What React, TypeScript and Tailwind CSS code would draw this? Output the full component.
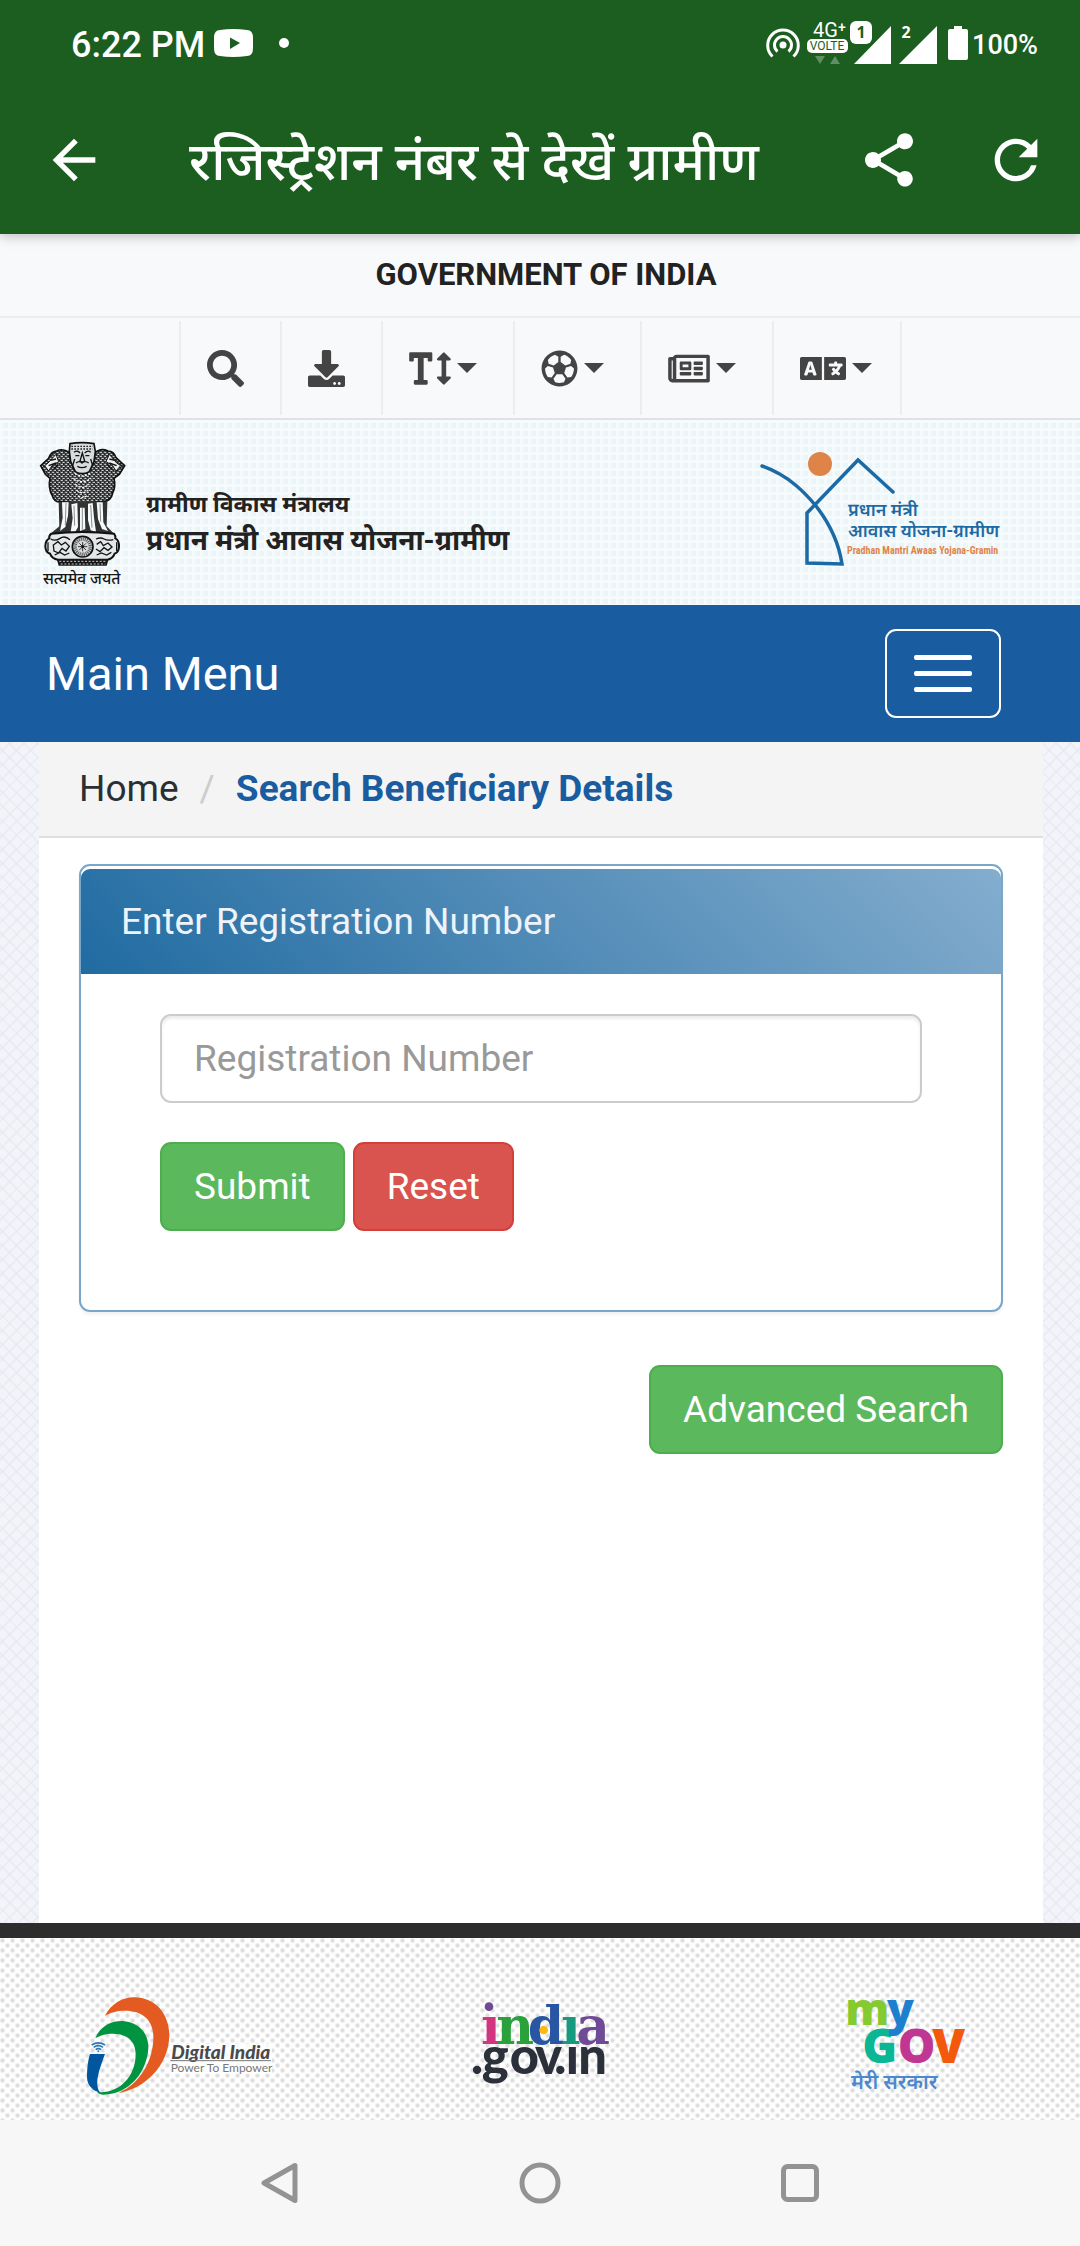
import { useState } from 'react';
import type { ReactNode } from 'react';
import {
  FaDownload,
  FaLanguage,
  FaRegFutbol,
  FaRegNewspaper,
  FaSearch,
  FaTextHeight,
} from 'react-icons/fa';
import { MdArrowBack, MdRefresh, MdShare } from 'react-icons/md';

const tools = [
  { label: 'Search', icon: <FaSearch className="h-[37px] w-[37px]" />, menu: false },
  { label: 'Download', icon: <FaDownload className="h-[37px] w-[37px]" />, menu: false },
  { label: 'Text size', icon: <FaTextHeight className="h-[37px] w-[42px]" />, menu: true },
  { label: 'Games', icon: <FaRegFutbol className="h-[37px] w-[37px]" />, menu: true },
  { label: 'News', icon: <FaRegNewspaper className="h-[37px] w-[42px]" />, menu: true },
  { label: 'Language', icon: <FaLanguage className="h-[37px] w-[46px]" />, menu: true },
];

function StatusBar() {
  return (
    <div className="flex h-[86px] items-center justify-between pl-[71px] pr-[42px] text-white">
      <div className="flex items-center">
        <span className="pt-[3px] text-[36px] leading-[40px] font-medium">6:22 PM</span>
        <svg className="ml-[9px]" width="39" height="28" viewBox="0 0 39 28">
          <path
            fill="#fff"
            d="M6 1Q19 -1 33 1Q39 1 39 9V19Q39 27 33 27Q19 29 6 27Q0 27 0 19V9Q0 1 6 1Z"
          />
          <path fill="#1b5e20" d="M16 8.500 26 14 16 20Z" />
        </svg>
        <span className="ml-[26px] h-[10px] w-[10px] rounded-full bg-white" />
      </div>
      <div className="flex items-center">
        <svg width="34" height="30" viewBox="0 0 34 30" fill="none" stroke="#fff" strokeWidth="3">
          <circle cx="17" cy="17" r="3.500" fill="#fff" stroke="none" />
          <path d="M11.500 23.500A8.500 8.500 0 1 1 22.500 23.500" />
          <path d="M6.500 28.500A15.300 15.300 0 1 1 27.500 28.500" />
        </svg>
        <svg className="ml-[7px] overflow-visible" width="42" height="46" viewBox="0 0 42 46" fontFamily="Roboto, sans-serif">
          <text x="6" y="17" fontSize="20" fill="#fff">4G</text>
          <text x="31" y="12" fontSize="14" fontWeight="500" fill="#fff">+</text>
          <rect y="19" width="41" height="14" rx="5" fill="#fff" />
          <text x="20" y="30" fontSize="12" textAnchor="middle" fill="#1b5e20">VOLTE</text>
          <path d="M8 36h10l-5 8ZM23 44h10l-5-8Z" fill="#5f8f62" />
        </svg>
        <svg className="ml-px" width="90" height="46" viewBox="0 0 90 46" fontFamily="Noto Sans, sans-serif">
          <path d="M4 44 41 6V44ZM49 44 87 6V44Z" fill="#fff" />
          <rect y="1" width="22" height="23" rx="6" fill="#fff" />
          <text x="11" y="18" fontSize="16" fontWeight="700" textAnchor="middle" fill="#1b5e20">1</text>
          <text x="56" y="18" fontSize="16" fontWeight="700" textAnchor="middle" fill="#fff">2</text>
        </svg>
        <svg className="ml-2" width="20" height="36" viewBox="0 0 20 36">
          <path d="M6 1h8v3h4q2 0 2 2v27q0 2-2 2H2q-2 0-2-2V6q0-2 2-2h4Z" fill="#fff" />
        </svg>
        <span className="ml-1 pt-[3px] text-[27px] leading-[32px] font-medium">100%</span>
      </div>
    </div>
  );
}

function AppBar() {
  return (
    <div className="flex h-[148px] items-center pl-[42px] pr-8 text-white">
      <button type="button" aria-label="Back" className="text-[64px]">
        <MdArrowBack />
      </button>
      <h1 className="ml-[83px] flex-1 pt-1 text-[53px] leading-[76px] font-medium whitespace-nowrap">
        रजिस्ट्रेशन नंबर से देखें ग्रामीण
      </h1>
      <button type="button" aria-label="Share" className="text-[64px]">
        <MdShare />
      </button>
      <button type="button" aria-label="Refresh" className="ml-[63px] text-[64px]">
        <MdRefresh />
      </button>
    </div>
  );
}

function Emblem() {
  return (
    <svg className="overflow-visible" width="110" height="164" viewBox="0 0 330 492" role="img" aria-label="Emblem of India">
      <defs>
        <pattern id="fur" width="13" height="12" patternUnits="userSpaceOnUse">
          <rect width="13" height="12" fill="#222" />
          <path d="M1 2Q4 8 7 2M7 8Q10 14 13 8" fill="none" stroke="#e4e8e9" strokeWidth="3" />
        </pattern>
      </defs>
      {/* manes of the side lions */}
      <path
        d="M120 66Q98 50 80 60Q62 62 56 82L32 104L46 130L60 142Q54 170 66 192Q74 216 92 212L120 214L156 222L194 214L222 212Q244 208 248 186Q258 166 252 142L268 130L284 104L258 80Q252 60 234 60Q212 50 194 66Z"
        fill="url(#fur)"
        stroke="#111"
        strokeWidth="5"
      />
      <path d="M78 70 54 96 44 104 56 120 66 104 86 92ZM238 70 260 96 272 104 258 120 248 104 228 92Z" fill="#eef1f2" stroke="#111" strokeWidth="3" />
      <path d="M62 88l16-4M56 104l22-8M70 116l14-16M254 88l-16-4M260 104l-22-8M246 116l-14-16" stroke="#111" strokeWidth="4" />
      {/* front lion */}
      <path d="M120 38Q156 32 192 38L196 62L192 92L178 122Q156 134 136 122L122 92L118 62Z" fill="#d8dcdd" stroke="#111" strokeWidth="5" />
      <path d="M124 46h64M124 54h64" stroke="#222" strokeWidth="4" strokeDasharray="5 4" />
      <path d="M132 64q10-8 18 2M164 66q10-10 18-2M136 74h12M166 74h12M157 66l-7 24q7 6 14 0ZM138 96q10-8 18 0q10-8 20 0M142 106q14 8 28 0M134 84l-6 20M182 84l6 20" fill="none" stroke="#111" strokeWidth="4" />
      <path d="M134 126q22 18 46 0M130 142q26 20 54 0M136 160q20 18 42 0M140 178q16 14 34 0M144 194q12 12 26 0" fill="none" stroke="#f4f6f7" strokeWidth="4" strokeDasharray="7 4" />
      {/* legs */}
      <path d="M86 212H232L230 286L250 306H64L88 286Z" fill="#333" />
      <path d="M96 214h20l-2 40-8 34-16 12 8-40ZM124 220l18-4 2 72-8 14h-14l6-40ZM150 230l14 0 2 64-16 6ZM174 218l14-2 4 44 6 42-16-4-8-30ZM200 214l18 0 2 60 14 26-18-6-12-30Z" fill="#f7fafb" />
      <path d="M108 216l-2 66M132 224l2 60M157 230v66M182 222l4 68M210 218l2 54" stroke="#555" strokeWidth="2" />
      {/* abacus with the wheel */}
      <path d="M64 308Q156 298 252 308Q258 316 256 322Q268 328 267 348Q266 364 254 368Q248 384 232 386H84Q66 384 60 368Q46 364 46 346Q46 328 58 322Q56 314 64 308Z" fill="#e5e8e9" stroke="#111" strokeWidth="6" />
      <path d="M62 324q14 8 28-2t30 4M70 342l14-10 10 10 12-8 12 12-10 14-12-8-10 14-14-6ZM74 372l16-8 14 8 14-6M198 324q14-6 24 0t28 2M200 340l12-8 8 12 14-8 12 12-12 10-12-8-12 12-12-8M200 372l14-6 16 6 14-8M54 334v26M260 334v26" fill="none" stroke="#151515" strokeWidth="4" />
      <circle cx="158" cy="347" r="31" fill="#ccd0d1" stroke="#111" strokeWidth="5" />
      <circle cx="158" cy="347" r="23" fill="none" stroke="#555" strokeWidth="10" strokeDasharray="3 3" />
      <circle cx="158" cy="347" r="16" fill="#ddd" />
      <path d="M158 333v28M144 347h28M148 337l20 20M168 337l-20 20" stroke="#333" strokeWidth="3" />
      <circle cx="158" cy="347" r="4" fill="#111" />
      <path d="M80 384H236L230 404H86Z" fill="#151515" />
      <path d="M88 391H230M92 399H226" stroke="#ccc" strokeWidth="3" strokeDasharray="6 5" />
      <text x="155" y="460" textAnchor="middle" fontSize="47" fontWeight="500" fill="#161616">
        सत्यमेव जयते
      </text>
    </svg>
  );
}

function SchemeLogo() {
  return (
    <svg className="overflow-visible" width="245" height="134" viewBox="0 0 245 134" role="img" aria-label="Pradhan Mantri Awaas Yojana-Gramin">
      <circle cx="61" cy="18" r="12" fill="#df8449" />
      <path
        d="M3 20C31 30 47 48 57 60C71 78 80 98 83 118L48 117V67L99 14L134 46"
        fill="none"
        stroke="#1c6aa5"
        strokeWidth="3.500"
        strokeLinecap="round"
      />
      <text x="89" y="70" fontSize="18" fontWeight="600" fill="#1c6aa5">प्रधान मंत्री</text>
      <text x="89" y="91" fontSize="18" fontWeight="600" fill="#1c6aa5">आवास योजना-ग्रामीण</text>
      <text x="88" y="108" fontSize="10" fontWeight="700" fontFamily="Roboto Condensed, Roboto, sans-serif" fill="#df8449">
        Pradhan Mantri Awaas Yojana-Gramin
      </text>
    </svg>
  );
}

function DigitalIndiaLogo() {
  return (
    <svg width="190" height="103" viewBox="255 340 570 309" role="img" aria-label="Digital India">
      <path d="M315 405C335 366 373 348 405 350C470 352 508 403 508 465C505 560 430 625 355 637C420 610 460 540 460 470C460 420 430 390 375 390C350 390 332 396 315 405Z" fill="#e35b20" />
      <path d="M286 472C302 435 335 420 367 421C415 424 445 455 445 500C443 570 390 642 310 642C297 641 292 636 292 634C355 640 407 590 407 520C407 480 380 460 340 459C315 459 300 465 286 472Z" fill="#009440" />
      <path d="M270 520H315C300 560 290 590 292 612C293 625 297 632 303 637C280 632 261 615 261 590C261 560 265 535 270 520Z" fill="#0057a0" />
      <path d="M275 493Q295 480 315 493M281 500Q295 490 309 500M287 507Q295 501 303 507" fill="none" stroke="#2c78b8" strokeWidth="5" />
      <circle cx="295" cy="512" r="3" fill="#2c78b8" />
      <rect x="512" y="490" width="304" height="90" fill="#fff" fillOpacity="0.800" />
      <text x="514" y="534" fontSize="57" fontWeight="900" fontStyle="italic" fontFamily="Lato, sans-serif" fill="#4a4a4c">
        Digital India
      </text>
      <path d="M511 540H813" stroke="#777" strokeWidth="3" />
      <text x="512" y="573" fontSize="36" fontFamily="Lato, sans-serif" fill="#77787a">
        Power To Empower
      </text>
    </svg>
  );
}

function IndiaGovLogo() {
  return (
    <svg className="overflow-visible" width="140" height="90" viewBox="215 120 420 270" role="img" aria-label="india.gov.in">
      <text y="251" fontFamily="DejaVu Serif, serif" fontWeight="700" fontSize="156">
        <tspan x="248" fill="#d2347f">ı</tspan>
        <tspan x="294" fill="#2ba13c">n</tspan>
        <tspan x="388" fill="#2856a3">d</tspan>
        <tspan x="488" fill="#159a80">ı</tspan>
        <tspan x="534" fill="#6f4a95">a</tspan>
      </text>
      <circle cx="272" cy="140" r="13" fill="#6f4a95" />
      <circle cx="436" cy="210" r="13" fill="#fdb913" />
      <text y="341" fontFamily="Lato, sans-serif" fontWeight="900" fontSize="152" fill="#2b303b">
        <tspan x="218">.</tspan>
        <tspan x="250">g</tspan>
        <tspan x="334">o</tspan>
        <tspan x="410">v</tspan>
        <tspan x="468">.</tspan>
        <tspan x="502">ı</tspan>
        <tspan x="540">n</tspan>
      </text>
    </svg>
  );
}

function MyGovLogo() {
  return (
    <svg className="overflow-visible" width="135" height="97" viewBox="159 110 405 291" role="img" aria-label="myGov मेरी सरकार">
      <g fontFamily="Open Sans, sans-serif" fontWeight="800">
        <text y="307" fontSize="142">
          <tspan x="247" fill="#0bb695">G</tspan>
          <tspan x="353" fill="#bf3793">O</tspan>
          <tspan x="457" fill="#f2590d">V</tspan>
        </text>
        <text y="195" fontSize="132">
          <tspan x="196" fill="#84ca30">m</tspan>
          <tspan x="321" fill="#1f7fcf">y</tspan>
        </text>
      </g>
      <text x="213" y="385" fontSize="61" fontWeight="600" fill="#4c88cf">मेरी सरकार</text>
    </svg>
  );
}

function Caret() {
  return (
    <svg width="20" height="10" viewBox="0 0 20 10">
      <path d="M0 0H20L10 10Z" fill="currentColor" />
    </svg>
  );
}

function ToolButton({ label, menu, children }: { label: string; menu: boolean; children: ReactNode }) {
  return (
    <button
      type="button"
      aria-label={label}
      className="flex h-[94px] items-center gap-[6px] border-l-2 border-[#ebedef] pl-[26px] pr-9 text-[#444] last:border-r-2 last:pr-7"
    >
      {children}
      {menu && <Caret />}
    </button>
  );
}

export default function App() {
  const [number, setNumber] = useState('');

  return (
    <div className="flex min-h-screen flex-col bg-white font-[Roboto,'Noto_Sans_Devanagari','Noto_Sans',sans-serif]">
      <header className="relative bg-[#1b5e20] shadow-[0_2px_12px_rgba(0,0,0,0.25)]">
        <StatusBar />
        <AppBar />
      </header>

      {/* Government strip */}
      <div className="bg-[#f8f9fb]">
        <div className="border-b-2 border-[#ebedef] pl-3 text-center text-[31px] leading-[82px] font-bold text-[#222]">
          GOVERNMENT OF INDIA
        </div>
        <div className="flex h-[102px] items-center justify-center border-b-2 border-[#dfe1e3]">
          {tools.map((tool) => (
            <ToolButton key={tool.label} label={tool.label} menu={tool.menu}>
              {tool.icon}
            </ToolButton>
          ))}
        </div>
      </div>

      {/* Ministry header */}
      <div className="flex h-[185px] items-center justify-between bg-[#ebf4f7] bg-[linear-gradient(to_right,#f5fafc_3px,transparent_3px),linear-gradient(#f5fafc_3px,transparent_3px)] bg-[length:8px_8px] pr-[76px] pl-[30px]">
        <div className="flex items-center">
          <Emblem />
          <div className="ml-[6px] pt-5 font-bold text-[#222]">
            <p className="text-[23px] leading-[36px]">ग्रामीण विकास मंत्रालय</p>
            <p className="text-[28px] leading-[36px]">प्रधान मंत्री आवास योजना-ग्रामीण</p>
          </div>
        </div>
        <SchemeLogo />
      </div>

      <nav className="flex h-[137px] items-center justify-between bg-[#1a5ca0] pr-[79px] pl-[46px] text-white">
        <span className="text-[47px] leading-[56px]">Main Menu</span>
        <button
          type="button"
          aria-label="Toggle navigation"
          className="flex h-[89px] w-[116px] flex-col items-center justify-center gap-[11px] rounded-[11px] border-2 border-white"
        >
          <span className="h-[5px] w-[58px] rounded-[2px] bg-white" />
          <span className="h-[5px] w-[58px] rounded-[2px] bg-white" />
          <span className="h-[5px] w-[58px] rounded-[2px] bg-white" />
        </button>
      </nav>

      {/* Page body */}
      <main className="flex flex-1 flex-col bg-[#f3f4f9] bg-[repeating-linear-gradient(45deg,#e4e6ee80_0_2px,transparent_2px_10px),repeating-linear-gradient(-45deg,#e4e6ee80_0_2px,transparent_2px_10px)] pr-[37px] pl-[39px] text-[37px]">
        <div className="flex-1 bg-white">
          <ol className="flex h-24 items-center border-b-2 border-[#dfdfdf] bg-[#f4f4f4] px-10">
            <li>
              <a href="#" className="text-[#2b2f31]">Home</a>
            </li>
            <li className="px-[21px] text-[#ccc]">/</li>
            <li className="font-bold text-[#1a5ca0]">Search Beneficiary Details</li>
          </ol>

          <div className="px-10 pt-[26px]">
            <form
              onSubmit={(e) => e.preventDefault()}
              className="rounded-[11px] border-2 border-[#7aa7c9] bg-white pt-[3px] shadow-[0_3px_3px_rgba(0,0,0,0.05)]"
            >
              <h2 className="rounded-t-[9px] bg-[linear-gradient(45deg,#206ba1,#84adce)] px-10 text-[37px] leading-[105px] text-[#eef3fa]">
                Enter Registration Number
              </h2>
              <div className="px-[79px] pt-10 pb-[79px]">
                <input
                  aria-label="Registration Number"
                  placeholder="Registration Number"
                  value={number}
                  onChange={(e) => setNumber(e.target.value)}
                  className="block h-[89px] w-full rounded-[11px] border-2 border-[#ccc] bg-white px-8 text-[#555] shadow-[inset_0_3px_3px_rgba(0,0,0,0.075)] placeholder:text-[#999]"
                />
                <div className="mt-[39px] flex gap-2">
                  <button type="submit" className="h-[89px] rounded-[11px] border-2 border-[#4cae4c] bg-[#5cb85c] px-8 text-white">
                    Submit
                  </button>
                  <button
                    type="reset"
                    onClick={() => setNumber('')}
                    className="h-[89px] rounded-[11px] border-2 border-[#d43f3a] bg-[#d9534f] px-8 text-white"
                  >
                    Reset
                  </button>
                </div>
              </div>
            </form>
            <div className="mt-[53px] flex justify-end">
              <button type="button" className="h-[89px] rounded-[11px] border-2 border-[#4cae4c] bg-[#5cb85c] px-8 text-white">
                Advanced Search
              </button>
            </div>
          </div>
        </div>
      </main>

      <footer>
        <div className="grid h-[197px] grid-cols-3 place-items-center border-t-[15px] border-[#2d2d2d] bg-[#fdfdfd] bg-[radial-gradient(circle_at_25%_25%,#dcdcdc_1px,transparent_3px),radial-gradient(circle_at_75%_75%,#dcdcdc_1px,transparent_3px)] bg-[length:10px_10px] pt-8">
          <a href="#"><DigitalIndiaLogo /></a>
          <a href="#"><IndiaGovLogo /></a>
          <a href="#"><MyGovLogo /></a>
        </div>
        <div className="flex h-[126px] items-center justify-center gap-[219px] bg-[#f7f7f7]">
          <button type="button" aria-label="Back">
            <svg width="40" height="42" viewBox="0 0 40 42" fill="none" stroke="#939393" strokeWidth="5" strokeLinejoin="round">
              <path d="M4 21 35 3.500V38.500Z" />
            </svg>
          </button>
          <button type="button" aria-label="Home">
            <svg width="42" height="42" viewBox="0 0 42 42" fill="none" stroke="#939393" strokeWidth="5">
              <circle cx="21" cy="21" r="18" />
            </svg>
          </button>
          <button type="button" aria-label="Recent apps">
            <svg width="40" height="40" viewBox="0 0 40 40" fill="none" stroke="#939393" strokeWidth="5">
              <rect x="3.500" y="3.500" width="33" height="33" rx="4" />
            </svg>
          </button>
        </div>
      </footer>
    </div>
  );
}
